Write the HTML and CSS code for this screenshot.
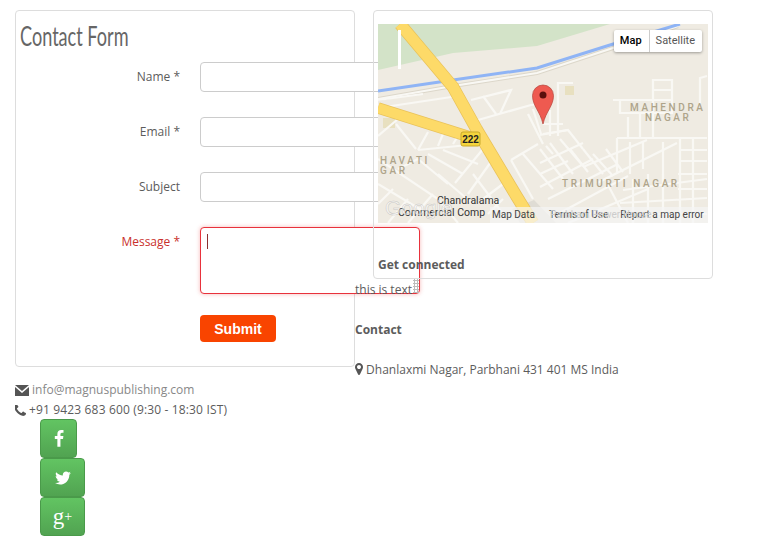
FILE: index.html
```html
<!DOCTYPE html>
<html lang="en">
<head>
    <meta charset="UTF-8">
    <title>Contact</title>
    <link rel="stylesheet" href="styles.css">
</head>

<body>
    <div class="page">
        <div class="left-col">
            <div class="panel form-panel">
                <h2 class="form-title">Contact Form</h2>

                <div class="form-row">
                    <label for="name">Name *</label>
                    <input type="text" id="name">
                </div>
                <div class="form-row">
                    <label for="email">Email *</label>
                    <input type="text" id="email">
                </div>
                <div class="form-row">
                    <label for="subject">Subject</label>
                    <input type="text" id="subject">
                </div>
                <div class="form-row error">
                    <label for="message">Message *</label>
                    <div class="area-wrap">
                        <textarea id="message"></textarea>
                        <span class="caret"></span>
                        <span class="grip"></span>
                    </div>
                </div>
                <div class="form-row submit-row">
                    <button class="submit">Submit</button>
                </div>
            </div>

            <div class="contact-lines">
                <div class="contact-line">
                    <svg class="ico ico-mail" viewBox="0 0 14 11"><path d="M0 0h14L7 6z"/><path d="M0 2l7 6 7-6v9H0z"/></svg>
                    <a class="mail-link" href="#">info@magnuspublishing.com</a>
                </div>
                <div class="contact-line">
                    <svg class="ico ico-phone" viewBox="300 250 1300 1300"><path d="M1600 1240q0 27-10 70.5t-21 68.5q-21 50-122 106-94 51-186 51-27 0-53-3.5t-57.5-12.5-47-14.5-55.5-20.5-49-18q-98-35-175-83-127-79-264-216t-216-264q-48-77-83-175-3-9-18-49t-20.5-55.5-14.5-47-12.5-57.5-3.5-53q0-92 51-186 56-101 106-122 25-11 68.5-21t70.5-10q14 0 21 3 18 6 53 76 11 19 30 54t35 63.5 31 53.5q3 4 17.5 25t21.5 35.5 7 28.5q0 20-28.5 50t-62 55-62 53-28.5 46q0 9 5 22.5t8.5 20.5 14 24 11.5 19q76 137 174 235t235 174q2 1 19 11.5t24 14 20.5 8.5 22.5 5q18 0 46-28.5t53-62 55-62 50-28.5q14 0 28.5 7t35.5 21.5 25 17.5q25 15 53.5 31t63.5 35 54 30q70 35 76 53 3 7 3 21z"/></svg>
                    <span class="phone-text">+91 9423 683 600 (9:30 - 18:30 IST)</span>
                </div>
            </div>

            <div class="social">
                <a class="social-btn btn-fb" href="#"><svg viewBox="0 0 1792 1792"><path d="M1343 12v264h-157q-86 0-116 36t-30 108v189h293l-39 296h-254v759h-306v-759h-255v-296h255v-218q0-186 104-288.5t277-102.5q147 0 228 12z"/></svg></a>
                <a class="social-btn" href="#"><svg viewBox="0 0 1792 1792"><path d="M1684 408q-67 98-162 167 1 14 1 42 0 130-38 259.5t-115.5 248.5-184.5 210.5-258 146-323 54.5q-271 0-496-145 35 4 78 4 225 0 401-138-105-2-188-64.5t-114-159.5q33 5 61 5 43 0 85-11-112-23-185.5-111.5t-73.5-205.5v-4q68 38 146 41-66-44-105-115t-39-154q0-88 44-163 121 149 294.5 238.5t371.5 99.5q-8-38-8-74 0-134 94.5-228.5t228.5-94.5q140 0 236 102 109-21 200-76-35 110-132 169 95-10 190-51z"/></svg></a>
                <a class="social-btn gplus" href="#">g<sup>+</sup></a>
            </div>
        </div>

        <div class="right-col">
            <div class="panel map-panel">
                <div class="map">
                    <svg class="map-svg" viewBox="0 0 330 199" width="330" height="199">
                        <rect class="m-land" width="330" height="199"/>
                        <path class="m-park" d="M0 0H232L159 22 75 29 0 46z"/>
                        <rect class="m-bld" x="187" y="62" width="9" height="9"/>
                        <rect class="m-bld" x="5" y="94" width="12" height="10"/>
                        <path class="m-grey" d="M142 199l-8-14 22-9 22 23z"/>

                        <path class="m-case" d="M0 75L75 62 159 49 232 25 300 2"/>
                        <g class="m-streets">
                            <path d="M0 75L75 62 159 49 232 25 300 2"/>
                            <path d="M0 84L80 72M0 76L45 70M100 96L153 81 162 80M93 76L133 66 122 90M105 72L118 90"/>
                            <path d="M40 126L100 120M20 95L0 112M40 126L50 108M60 122L65 110M75 120L80 112M18 100L38 125"/>
                            <path d="M77 159L105 125M90 170L115 135M60 150L95 180M0 135L60 175 80 199M0 160L50 190M30 199L55 170M95 150L125 190"/>
                            <path d="M40 135L70 160M20 145L40 135M133 136L160 120M133 136L155 175M145 130L175 165"/>
                            <path d="M50 130L85 150M65 126L100 140M30 175L10 199M15 165L0 180M105 175L125 160M110 190L125 175"/>
                            <path d="M180 112V59H195M150 90L165 120M165 100H185M165 110L190 106M155 85L163 110M172 86V112"/>
                            <path d="M235 76H275M242 76V89H275M275 115V56H294V89H275M275 66H294M275 76H294M250 93V113M262 89V113M322 80V54L329 52"/>
                            <path d="M162 111L190 106 205 125M239 114H329M239 114V150M205 143L269 116M219 159L299 119M302 126H329M302 137H329M300 150H329M300 165H329"/>
                            <path d="M302 114V199M315 114V199M245 166L329 155M242 179L329 174M242 190L329 190M229 159L250 199"/>
                            <path d="M172 119L195 150M182 115L205 142M162 125L185 155M162 139L205 119M162 150L190 137M162 163L215 135M170 175L240 140M180 190L250 152M190 199L270 165M205 125L225 150M252 118V150M265 118V145M285 118V165"/>
                            <path d="M175 130L168 122M192 125L210 148M215 130L235 152M228 125L245 148M255 155V199M270 150V199M285 150V199"/>
                        </g>

                        <path class="m-river" d="M0 67L75 56 159 44 232 21 302 0"/>
                        <path class="m-road-edge" d="M22 0L75 63 99 106 139 173 155 199"/>
                        <path class="m-road-edge edge-thin" d="M0 84L92 113"/>
                        <path class="m-road" d="M22 0L75 63 99 106 139 173 155 199"/>
                        <path class="m-road road-thin" d="M0 84L92 113"/>
                        <rect class="m-shield" x="83" y="108" width="19" height="14" rx="2"/>
                        <text class="m-shield-txt" x="92.5" y="119">222</text>
                        <rect class="m-zoom" x="20" y="6" width="3" height="39"/>

                        <text class="m-area" x="252" y="87">MAHENDRA</text>
                        <text class="m-area" x="267" y="97">NAGAR</text>
                        <text class="m-area" x="2" y="140">HAVATI</text>
                        <text class="m-area" x="2" y="150">GAR</text>
                        <text class="m-area" x="184" y="163">TRIMURTI NAGAR</text>
                        <text class="m-poi" x="59" y="180">Chandralama</text>
                        <text class="m-poi" x="20" y="192">Commercial Comp</text>
                        <text class="m-google" x="7" y="191">Google</text>

                        <path class="m-pin" d="M165 100C162 87 154.500 82 154.500 71.500A10.500 10.500 0 0 1 175.500 71.500C175.500 82 168 87 165 100z"/>
                        <circle class="m-pin-dot" cx="165" cy="71" r="3.500"/>
                    </svg>

                    <div class="map-type">
                        <span class="type-btn type-on">Map</span>
                        <span class="type-btn">Satellite</span>
                    </div>
                    <div class="map-foot">
                        <span class="foot-faint">Parbhani Power House</span>
                        <span>Map Data</span>
                        <span>Terms of Use</span>
                        <span>Report a map error</span>
                    </div>
                </div>
                <h4 class="connected">Get connected</h4>
            </div>

            <p class="plain-text">this is text</p>
            <h4 class="contact-head">Contact</h4>
            <p class="address">
                <svg class="ico ico-pin" viewBox="0 128 1024 1536"><path d="M768 640q0-106-75-181t-181-75-181 75-75 181 75 181 181 75 181-75 75-181zm256 0q0 109-33 179l-364 774q-16 33-47.5 52t-67.5 19-67.5-19-46.5-52l-365-774q-33-70-33-179 0-212 150-362t362-150 362 150 150 362z"/></svg>
                Dhanlaxmi Nagar, Parbhani 431 401 MS India
            </p>
        </div>
    </div>
</body>
</html>
```

FILE: styles.css
```css
body {
    margin: 0;
    background-color: #fff;
    color: #5c5c5c;
    font-family: "Open Sans", Arial, sans-serif;
    font-size: 12px;
    line-height: 20px;
}
.page {
    display: flex;
    padding: 10px 0 0 15px;
}
.left-col {
    width: 340px;
    flex-shrink: 0;
}
.right-col {
    position: relative; /* stays above the textarea */
    width: 358px;
    flex-shrink: 0;
}
.panel {
    border: 1px solid #ddd;
    border-radius: 4px;
    box-sizing: border-box;
}

/* form */
.form-panel {
    height: 357px;
    padding-top: 8px;
}
.form-title {
    margin: 0 0 9px 4px;
    font-family: "Lato", "Liberation Sans", sans-serif;
    font-size: 27px;
    font-weight: 400;
    line-height: 34px;
    color: #666;
    transform: scaleX(0.67);
    transform-origin: left;
}
.form-row {
    display: flex;
    gap: 20px;
    margin-bottom: 25px;
}
.form-row label {
    width: 164px;
    height: 30px;
    flex-shrink: 0;
    text-align: right;
    line-height: 30px;
}
.form-row input {
    width: 220px;
    height: 30px;
    flex-shrink: 0;
    box-sizing: border-box;
    border: 1px solid #ccc;
    border-radius: 4px;
    background: #fff;
}
.error label {
    color: #c9302c;
}
.area-wrap {
    position: relative;
    flex-shrink: 0;
    width: 220px;
    height: 67px;
}
.area-wrap textarea {
    display: block;
    width: 220px;
    height: 67px;
    box-sizing: border-box;
    border: 1px solid #e8323c;
    border-radius: 4px;
    box-shadow: 0 0 4px rgba(233, 50, 50, 0.35);
    background: #fff;
    resize: none;
}
.caret {
    position: absolute;
    left: 7px;
    top: 7px;
    width: 1px;
    height: 15px;
    background-color: #8a3030;
}
.grip {
    position: absolute;
    right: 1px;
    bottom: 1px;
    width: 6px;
    height: 14px;
    background-image: radial-gradient(#bbb 1.2px, transparent 1.2px);
    background-size: 3px 3px;
}
.submit-row {
    padding-left: 184px;
    margin-top: -4px;
}
.submit {
    width: 76px;
    height: 27px;
    padding: 0;
    border: none;
    border-radius: 4px;
    background-color: #f94400;
    color: #fff;
    font-family: "Liberation Sans", Arial, sans-serif;
    font-size: 14px;
    font-weight: bold;
}

/* contact lines */
.contact-lines {
    margin-top: 13px;
}
.contact-line {
    display: flex;
    align-items: center;
    height: 20px;
}
.ico {
    fill: #555;
    flex-shrink: 0;
}
.ico-mail {
    width: 14px;
    height: 11px;
    margin-right: 3px;
}
.ico-phone {
    width: 11px;
    height: 11px;
    margin-right: 3px;
}
.mail-link {
    color: #888;
    text-decoration: none;
}
.phone-text {
    letter-spacing: 0.15px;
}

/* social buttons */
.social {
    margin: -1px 0 0 25px;
}
.social-btn {
    display: flex;
    align-items: center;
    justify-content: center;
    width: 45px;
    height: 39px;
    box-sizing: border-box;
    border: 1px solid #4a9a4a;
    border-radius: 4px;
    background: linear-gradient(#62c462, #51a351);
    color: #fff;
    text-decoration: none;
}
.social-btn svg {
    width: 18px;
    height: 18px;
    fill: #fff;
}
.btn-fb {
    width: 37px;
}
.gplus {
    font-family: "Liberation Serif", serif;
    font-size: 23px;
    line-height: 22px;
}
.gplus sup {
    font-size: 14px;
    line-height: 0;
}

/* map */
.map-panel {
    width: 340px;
    height: 269px;
    margin-left: 18px;
    padding: 13px 0 0 4px;
}
.map {
    position: relative;
    width: 330px;
    height: 199px;
    overflow: hidden;
}
.map-svg {
    display: block;
}
.m-land { fill: #efebe2; }
.m-park { fill: #d3e3c8; }
.m-bld { fill: #e8e0c0; }
.m-grey { fill: #dfdcd4; }
.m-case {
    fill: none;
    stroke: #dcd7ca;
    stroke-width: 4;
}
.m-streets path {
    fill: none;
    stroke: #f9f8f4;
    stroke-width: 2.2;
}
.m-river {
    fill: none;
    stroke: #8fb4f5;
    stroke-width: 3;
}
.m-road-edge {
    fill: none;
    stroke: #e9c25a;
    stroke-width: 12.5;
}
.edge-thin {
    stroke-width: 11.5;
}
.m-road {
    fill: none;
    stroke: #fdda68;
    stroke-width: 11;
}
.road-thin {
    stroke-width: 10;
}
.m-shield {
    fill: #f5d43c;
    stroke: #c9a92a;
}
.m-shield-txt {
    fill: #222;
    font: bold 10px "Liberation Sans", sans-serif;
    text-anchor: middle;
}
.m-zoom { fill: #fff; }
.m-area {
    fill: #aea48a;
    font: 500 10px "Roboto", sans-serif;
    letter-spacing: 2.6px;
}
.m-poi {
    fill: #333;
    font: 10.500px "Roboto", sans-serif;
}
.m-google {
    fill: rgba(255, 255, 255, 0.55);
    stroke: rgba(170, 170, 170, 0.6);
    stroke-width: 0.5;
    font: 21px "Liberation Sans", sans-serif;
}
.m-pin {
    fill: #ee5a50;
    stroke: #b5423a;
    stroke-width: 0.7;
}
.m-pin-dot { fill: #5a0f0c; }

.map-type {
    position: absolute;
    top: 6px;
    right: 6px;
    display: flex;
    height: 22px;
    background-color: #fff;
    border-radius: 2px;
    box-shadow: 0 1px 3px rgba(0, 0, 0, 0.35);
    font-family: "Roboto", Arial, sans-serif;
    font-size: 11px;
    line-height: 22px;
}
.type-btn {
    padding: 0 7px 0 6px;
    color: #565656;
}
.type-on {
    color: #000;
    font-weight: 500;
    border-right: 1px solid #ccc;
}
.map-foot {
    position: absolute;
    right: 0;
    bottom: 0;
    left: 112px;
    display: flex;
    height: 16px;
    background-color: rgba(245, 245, 245, 0.7);
    font-family: "Roboto", Arial, sans-serif;
    font-size: 10px;
    line-height: 16px;
    color: #444;
}
.map-foot span:nth-child(2) {
    margin-left: 2px;
}
.map-foot span:nth-child(3) {
    margin-left: 14px;
}
.map-foot span:nth-child(4) {
    margin-left: 12px;
}
.foot-faint {
    position: absolute;
    left: 60px;
    color: #ccc;
}

.connected {
    margin: 32px 0 0;
    font-size: 12px;
    font-weight: bold;
    line-height: 20px;
}
.plain-text {
    margin: 1px 0 0;
}
.contact-head {
    margin: 20px 0 0;
    font-size: 12px;
    font-weight: bold;
    line-height: 20px;
}
.address {
    margin: 20px 0 0;
}
.ico-pin {
    width: 8px;
    height: 12px;
    vertical-align: -1px;
}
```
